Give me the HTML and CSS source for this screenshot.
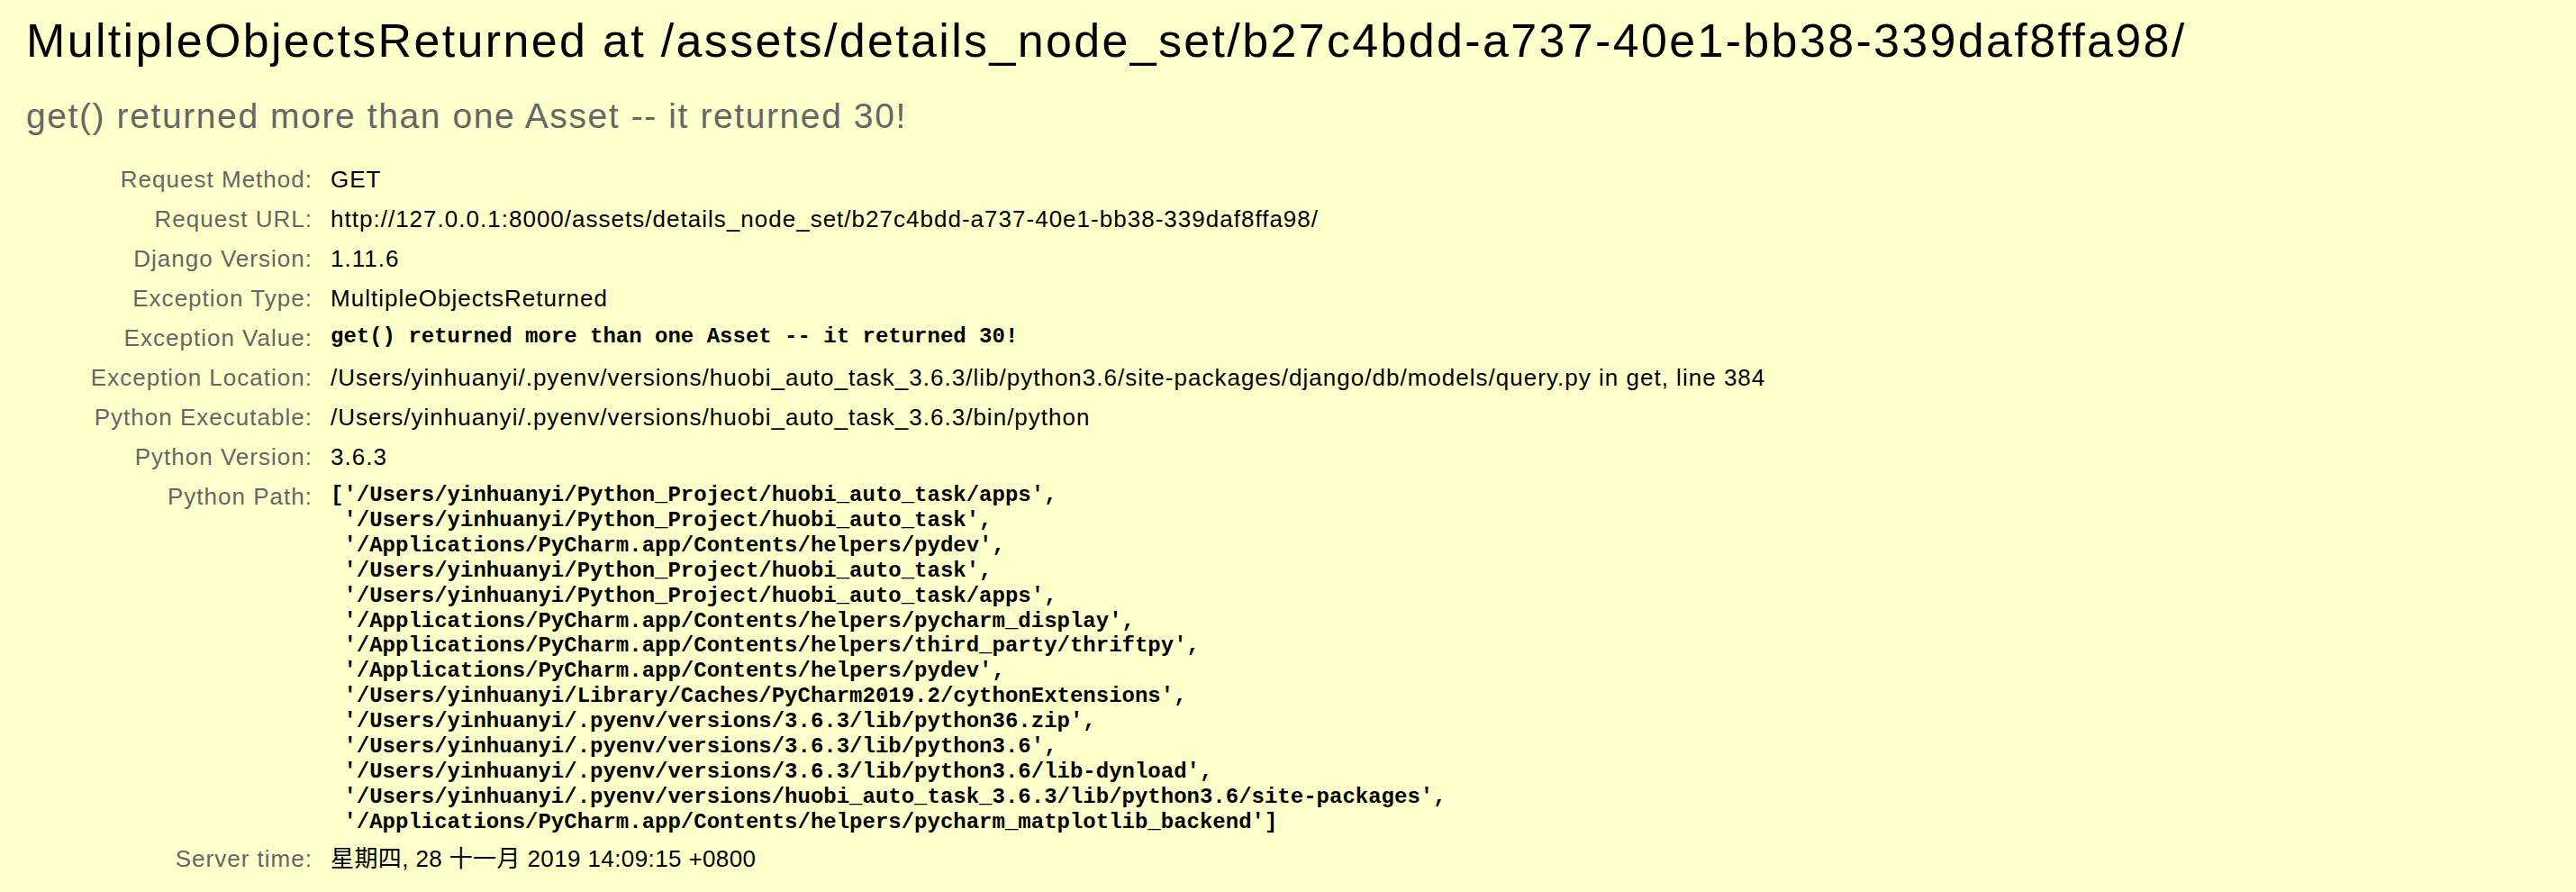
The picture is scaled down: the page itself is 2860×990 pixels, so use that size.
FILE: index.html
```html
<!DOCTYPE html>
<html lang="en">
<head>
<meta charset="utf-8">
<title>MultipleObjectsReturned at /assets/details_node_set/b27c4bdd-a737-40e1-bb38-339daf8ffa98/</title>
<link rel="stylesheet" href="styles.css">
</head>
<body>
<div class="summary">
  <h1 class="title">MultipleObjectsReturned at /assets/details_node_set/b27c4bdd-a737-40e1-bb38-339daf8ffa98/</h1>
  <p class="exception-value">get() returned more than one Asset -- it returned 30!</p>
  <table class="meta">
    <tbody>
      <tr><th>Request Method:</th><td>GET</td></tr>
      <tr><th>Request URL:</th><td>http://127.0.0.1:8000/assets/details_node_set/b27c4bdd-a737-40e1-bb38-339daf8ffa98/</td></tr>
      <tr><th>Django Version:</th><td>1.11.6</td></tr>
      <tr><th>Exception Type:</th><td>MultipleObjectsReturned</td></tr>
      <tr><th>Exception Value:</th><td><pre class="mono">get() returned more than one Asset -- it returned 30!</pre></td></tr>
      <tr><th>Exception Location:</th><td>/Users/yinhuanyi/.pyenv/versions/huobi_auto_task_3.6.3/lib/python3.6/site-packages/django/db/models/query.py in get, line 384</td></tr>
      <tr><th>Python Executable:</th><td>/Users/yinhuanyi/.pyenv/versions/huobi_auto_task_3.6.3/bin/python</td></tr>
      <tr><th>Python Version:</th><td>3.6.3</td></tr>
      <tr><th>Python Path:</th><td><pre class="mono">['/Users/yinhuanyi/Python_Project/huobi_auto_task/apps',
 '/Users/yinhuanyi/Python_Project/huobi_auto_task',
 '/Applications/PyCharm.app/Contents/helpers/pydev',
 '/Users/yinhuanyi/Python_Project/huobi_auto_task',
 '/Users/yinhuanyi/Python_Project/huobi_auto_task/apps',
 '/Applications/PyCharm.app/Contents/helpers/pycharm_display',
 '/Applications/PyCharm.app/Contents/helpers/third_party/thriftpy',
 '/Applications/PyCharm.app/Contents/helpers/pydev',
 '/Users/yinhuanyi/Library/Caches/PyCharm2019.2/cythonExtensions',
 '/Users/yinhuanyi/.pyenv/versions/3.6.3/lib/python36.zip',
 '/Users/yinhuanyi/.pyenv/versions/3.6.3/lib/python3.6',
 '/Users/yinhuanyi/.pyenv/versions/3.6.3/lib/python3.6/lib-dynload',
 '/Users/yinhuanyi/.pyenv/versions/huobi_auto_task_3.6.3/lib/python3.6/site-packages',
 '/Applications/PyCharm.app/Contents/helpers/pycharm_matplotlib_backend']</pre></td></tr>
      <tr><th>Server time:</th><td class="server-time">星期四, 28 十一月 2019 14:09:15 +0800</td></tr>
    </tbody>
  </table>
</div>
</body>
</html>
```

FILE: styles.css
```css
html, body {
  margin: 0;
  padding: 0;
}

body {
  background: #ffffcc;
  color: #000;
  font-family: "Liberation Sans", "Noto Sans CJK SC", sans-serif;
  font-size: 26px;
  letter-spacing: 0.039em;
}

.summary {
  padding: 15px 20px 20px 29px;
}

.title {
  margin: 0;
  font-size: 52px;
  line-height: 60px;
  font-weight: normal;
  letter-spacing: 0.045em;
  white-space: nowrap;
}

.exception-value {
  margin: 31px 0 0 0;
  font-size: 39px;
  line-height: 45px;
  letter-spacing: 0.041em;
  color: #666;
}

.meta {
  margin-top: 26px;
  border-collapse: collapse;
  border: none;
}

.meta th,
.meta td {
  vertical-align: top;
  line-height: 36px;
  padding: 4px 6px;
}

.meta th {
  width: 312px;
  padding-right: 13px;
  text-align: right;
  color: #666;
  font-weight: normal;
  white-space: nowrap;
}

.meta td {
  padding-left: 7px;
  white-space: nowrap;
}

.meta td.server-time {
  letter-spacing: 0.015em;
}

.mono {
  margin: 0;
  padding-top: 3px;
  font-family: "Liberation Mono", monospace;
  font-size: 24px;
  line-height: 27.9px;
  letter-spacing: 0;
  font-weight: bold;
  white-space: pre;
}
```
